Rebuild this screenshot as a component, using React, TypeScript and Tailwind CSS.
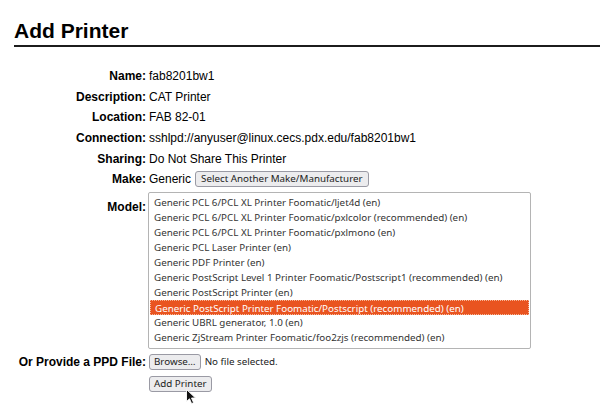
import React from "react";

const rows: [string, string][] = [
  ["Name:", "fab8201bw1"],
  ["Description:", "CAT Printer"],
  ["Location:", "FAB 82-01"],
  ["Connection:", "sshlpd://anyuser@linux.cecs.pdx.edu/fab8201bw1"],
  ["Sharing:", "Do Not Share This Printer"],
];

const models = [
  "Generic PCL 6/PCL XL Printer Foomatic/ljet4d (en)",
  "Generic PCL 6/PCL XL Printer Foomatic/pxlcolor (recommended) (en)",
  "Generic PCL 6/PCL XL Printer Foomatic/pxlmono (en)",
  "Generic PCL Laser Printer (en)",
  "Generic PDF Printer (en)",
  "Generic PostScript Level 1 Printer Foomatic/Postscript1 (recommended) (en)",
  "Generic PostScript Printer (en)",
  "Generic PostScript Printer Foomatic/Postscript (recommended) (en)",
  "Generic UBRL generator, 1.0 (en)",
  "Generic ZjStream Printer Foomatic/foo2zjs (recommended) (en)",
];

const selected = 7;

const widget = "font-['Noto_Sans',sans-serif] text-[9.8px]";
const btn =
  "h-[16px] px-[4px] bg-[#ececee] border border-[#9a9aa4] rounded-[3px] text-[#222] leading-[14px] " +
  widget;

function Row({ label, children }: { label: string; children: React.ReactNode }) {
  return (
    <div className="flex h-[20.6px] items-center">
      <div className="w-[146px] shrink-0 text-right font-bold">{label}</div>
      <div className="ml-[3px] flex items-center">{children}</div>
    </div>
  );
}

export default function App() {
  return (
    <div className="relative w-[600px] h-[408px] overflow-hidden bg-white text-black text-[12px] leading-[14px] font-['Liberation_Sans',Arial,sans-serif]">
      <h1 className="mt-[19px] ml-[14px] pb-[2px] border-b-2 border-[#1c1c1c] text-[21px] font-bold leading-[24px]">
        Add Printer
      </h1>

      <div className="mt-[19px]">
        {rows.map(([label, value]) => (
          <Row key={label} label={label}>
            {value}
          </Row>
        ))}
        <Row label="Make:">
          Generic
          <button className={"ml-[4px] px-[5px] " + btn}>Select Another Make/Manufacturer</button>
        </Row>

        {/* model list */}
        <div className="flex mt-[2px]">
          <div className="w-[146px] shrink-0 text-right font-bold pt-[8px]">Model:</div>
          <div className="ml-[2px] w-[383px] h-[157px] border border-[#b4b4b4] rounded-[2px] pt-[2px] px-[1px]">
            {models.map((m, i) => (
              <div
                key={m}
                className={
                  "h-[15.1px] pl-[4px] leading-[15px] whitespace-nowrap " +
                  widget +
                  (i === selected
                    ? " bg-[#e95420] text-white border border-dotted border-[#f6b899] pl-[3px] leading-[13px]"
                    : " text-[#333]")
                }
              >
                {m}
              </div>
            ))}
          </div>
        </div>

        <div className="flex items-center mt-[5px] h-[16px]">
          <div className="w-[146px] shrink-0 text-right font-bold">Or Provide a PPD File:</div>
          <button className={"ml-[3px] h-[15px] " + btn}>Browse…</button>
          <span className={"ml-[4px] text-[#222] " + widget}>No file selected.</span>
        </div>
        <div className="mt-[6px] ml-[149px]">
          <button className={btn}>Add Printer</button>
        </div>
      </div>

      {/* mouse pointer */}
      <svg
        className="absolute left-[186px] top-[389px]"
        width="11"
        height="16"
        viewBox="0 0 11 16"
      >
        <path
          d="M0.5 0.5 L0.5 12.5 L3.5 9.8 L5.6 14.6 L7.6 13.7 L5.5 9 L9.5 9 Z"
          fill="#111"
          stroke="#fff"
          strokeWidth="0.9"
        />
      </svg>
    </div>
  );
}
